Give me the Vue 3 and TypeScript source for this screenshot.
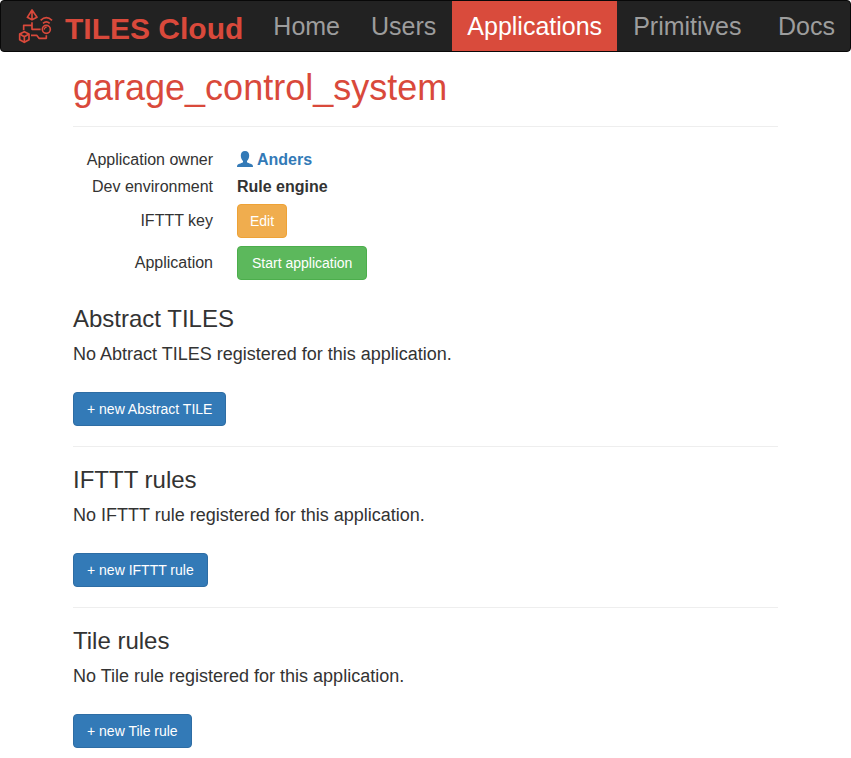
<script setup lang="ts">
interface NavItem {
  label: string
  active?: boolean
  end?: boolean
}

interface Section {
  title: string
  empty: string
  action: string
}

const navItems: NavItem[] = [
  { label: 'Home' },
  { label: 'Users' },
  { label: 'Applications', active: true },
  { label: 'Primitives' },
  { label: 'Docs', end: true },
]

const sections: Section[] = [
  {
    title: 'Abstract TILES',
    empty: 'No Abtract TILES registered for this application.',
    action: '+ new Abstract TILE',
  },
  {
    title: 'IFTTT rules',
    empty: 'No IFTTT rule registered for this application.',
    action: '+ new IFTTT rule',
  },
  {
    title: 'Tile rules',
    empty: 'No Tile rule registered for this application.',
    action: '+ new Tile rule',
  },
]
</script>

<template>
  <div class="page">
    <nav class="navbar">
      <a class="brand" href="#">
        <svg class="logo" viewBox="0 0 126 126" aria-hidden="true">
          <g fill="none" stroke="currentColor" stroke-width="5" stroke-linejoin="round">
            <path d="M54 15 L40 37 L54 44 L69 37 Z M54 15 V44" />
            <path d="M54 52 V73 H80" />
            <path d="M29 76 V61 H54" />
            <path d="M51 91 H68 L75 100 H97 V91" />
            <circle cx="97" cy="73" r="12" />
            <path d="M91 74 A6 6 0 0 1 98 67" stroke-width="4" />
            <path d="M80 46 Q97 30 114 46" />
            <path d="M87 55 Q97 46 107 55" />
            <path d="M31 80 L45 87 V104 L31 112 L17 104 V87 Z" />
            <path d="M17 87 L31 95 L45 87 M31 95 V112" />
          </g>
        </svg>
        <span>TILES Cloud</span>
      </a>
      <ul class="nav">
        <li v-for="item in navItems" :key="item.label" :class="{ end: item.end }">
          <a href="#" :class="{ active: item.active }">{{ item.label }}</a>
        </li>
      </ul>
    </nav>

    <main class="container">
      <h1>garage_control_system</h1>

      <dl class="details">
        <div class="row">
          <dt>Application owner</dt>
          <dd>
            <a class="owner" href="#">
              <svg class="user" viewBox="0 0 16 18" aria-hidden="true">
                <path
                  fill="currentColor"
                  d="M8 0 C5.2 0 3.8 1.8 3.8 4.6 C3.8 7 4.8 9 6 10 V11.2 C5.6 12 1.4 12.6 .6 13.8 C.1 14.4 0 15 0 16 H16 C16 15 15.9 14.4 15.4 13.8 C14.6 12.6 10.4 12 10 11.2 V10 C11.2 9 12.2 7 12.2 4.6 C12.2 1.8 10.8 0 8 0 Z"
                />
              </svg>
              <span>Anders</span>
            </a>
          </dd>
        </div>
        <div class="row">
          <dt>Dev environment</dt>
          <dd>Rule engine</dd>
        </div>
        <div class="row">
          <dt>IFTTT key</dt>
          <dd><button type="button" class="btn warning">Edit</button></dd>
        </div>
        <div class="row">
          <dt>Application</dt>
          <dd><button type="button" class="btn success">Start application</button></dd>
        </div>
      </dl>

      <section v-for="section in sections" :key="section.title" class="section">
        <h2>{{ section.title }}</h2>
        <p>{{ section.empty }}</p>
        <button type="button" class="btn primary">{{ section.action }}</button>
      </section>
    </main>
  </div>
</template>

<style>
body {
  background: #fff;
}
</style>

<style scoped>
.page {
  font-family: "Liberation Sans", Arial, sans-serif;
  color: #333;
}

a {
  text-decoration: none;
}

.navbar {
  display: flex;
  min-height: 50px;
  border: 1px solid #080808;
  border-radius: 4px;
  background: #222;
}

.brand {
  display: flex;
  align-items: center;
  gap: 9px;
  padding: 0 15px 0 13px;
  color: #d9493b;
  font-size: 30px;
  font-weight: bold;
  line-height: 34px;
  white-space: nowrap;
}

.brand span {
  padding-top: 6px;
}

.logo {
  width: 42px;
  height: 42px;
  flex: none;
}

.nav {
  display: flex;
  flex: 1;
  gap: 1px;
  margin: 0;
  padding: 0;
  list-style: none;
}

.nav a {
  display: block;
  padding: 10px 15px;
  color: #9d9d9d;
  font-size: 25px;
  line-height: 30px;
}

.nav .end {
  margin-left: auto;
}

.nav a.active {
  background: #d94b3c;
  color: #fff;
}

.container {
  padding: 16px 73px 10px;
}

h1 {
  margin: 0;
  padding-bottom: 18px;
  border-bottom: 1px solid #eee;
  color: #d9493b;
  font-size: 36px;
  font-weight: normal;
  line-height: 40px;
}

.details {
  margin: 19px 0 22px;
  font-size: 16px;
  line-height: 23px;
}

.row {
  display: grid;
  grid-template-columns: 140px 1fr;
  column-gap: 24px;
  align-items: center;
  padding: 2px 0;
}

.row:has(.btn) {
  padding: 4px 0;
}

.row:has(.btn) dt {
  padding-bottom: 2px;
}

dt {
  text-align: right;
}

dd {
  display: flex;
  margin: 0;
  font-weight: bold;
}

.owner {
  display: flex;
  align-items: center;
  gap: 4px;
  color: #337ab7;
}

.user {
  width: 16px;
  height: 18px;
}

.btn {
  padding: 6px 12px;
  border: 1px solid;
  border-radius: 4px;
  color: #fff;
  font-family: inherit;
  font-size: 14px;
  line-height: 20px;
  cursor: pointer;
}

.primary {
  padding: 6px 13px;
  background: #337ab7;
  border-color: #2e6da4;
}

.success {
  padding: 6px 14px;
  background: #5cb85c;
  border-color: #4cae4c;
}

.warning {
  background: #f0ad4e;
  border-color: #eea236;
}

.section + .section {
  margin-top: 20px;
  padding-top: 20px;
  border-top: 1px solid #eee;
}

h2 {
  margin: 0 0 9px;
  font-size: 24px;
  font-weight: normal;
  line-height: 26px;
}

p {
  margin: 0 0 25px;
  font-size: 18px;
  line-height: 26px;
}
</style>
